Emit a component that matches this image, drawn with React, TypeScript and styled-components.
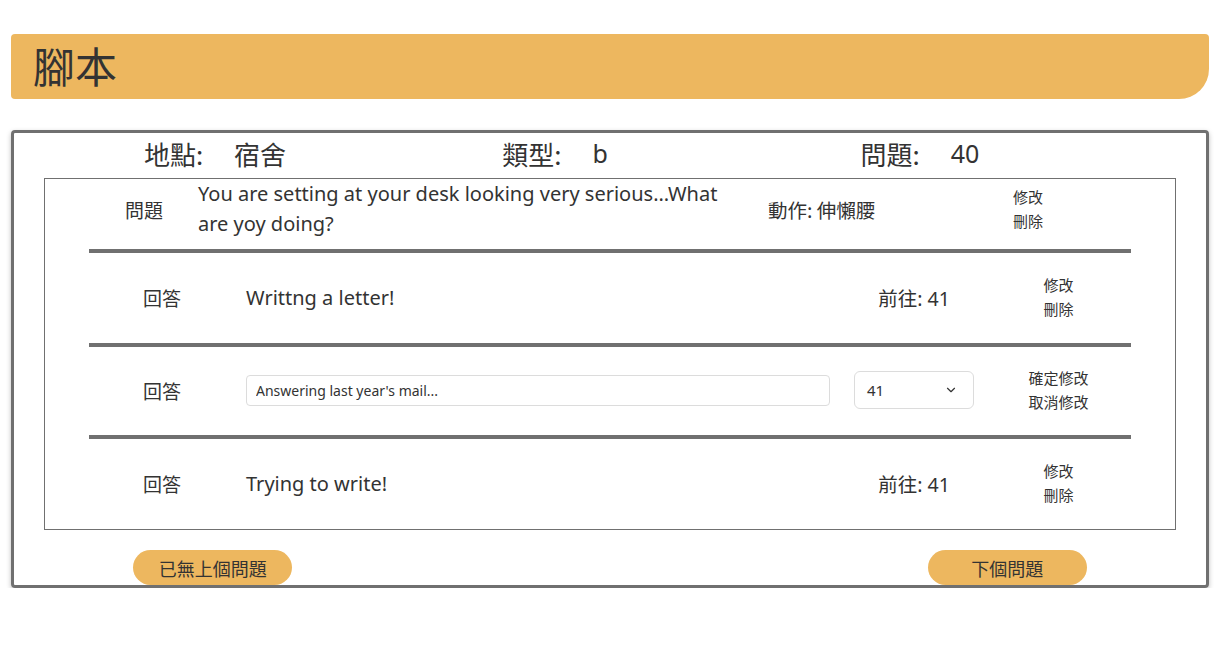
import React from "react";
import styled, { createGlobalStyle } from "styled-components";
import { ChevronDown } from "lucide-react";

const Global = createGlobalStyle`
  html, body { margin: 0; padding: 0; background: #fff; }
  body {
    font-family: "Noto Sans", "Noto Sans CJK TC", sans-serif;
    color: #333;
  }
  * { box-sizing: border-box; }
`;

const Page = styled.div`
  padding: 34px 14px 0 11px;
  display: flex;
  flex-direction: column;
  gap: 31px;
`;

const TitleBar = styled.div`
  height: 65px;
  background: #edb75f;
  border-radius: 4px 4px 30px 4px;
  display: flex;
  align-items: center;
  padding: 0 0 4px 22px;
`;

const Title = styled.h1`
  margin: 0;
  font-size: 42px;
  font-weight: 400;
  color: #333;
  font-family: "Noto Sans CJK TC", sans-serif;
`;

const Panel = styled.div`
  border: 3px solid #707070;
  border-radius: 4px;
  box-shadow: 0 2px 5px rgba(0, 0, 0, 0.25);
  display: flex;
  flex-direction: column;
`;

const InfoRow = styled.div`
  height: 45px;
  padding-bottom: 3px;
  display: grid;
  grid-template-columns: 402px 278px 452px;
  align-items: center;
`;

const InfoItem = styled.div`
  display: flex;
  justify-content: center;
  gap: 31px;
  font-size: 26px;
  line-height: 1;
  font-family: "Noto Sans CJK TC", sans-serif;
`;

const InfoValue = styled.span`
  font-family: "Noto Sans", "Noto Sans CJK TC", sans-serif;
  font-size: 25px;
`;

const InnerBox = styled.div`
  margin: 0 30px;
  border: 1px solid #707070;
  padding: 0 44px;
  display: flex;
  flex-direction: column;
`;

const QuestionRow = styled.div`
  margin: 0 -44px;
  height: 70px;
  padding: 0 0 10px 64px;
  display: grid;
  grid-template-columns: 70px 560px 274px 1fr;
  align-items: center;
`;

const Label = styled.div`
  text-align: center;
  font-size: 19px;
  font-family: "Noto Sans CJK TC", sans-serif;
`;

const QuestionText = styled.div`
  padding-left: 19px;
  font-size: 20px;
  line-height: 30px;
`;

const Action = styled.div`
  padding-left: 29px;
  font-size: 19.5px;
  font-family: "Noto Sans CJK TC", sans-serif;
`;

const LinkStack = styled.div<{ $center?: boolean }>`
  display: flex;
  flex-direction: column;
  align-items: ${(p) => (p.$center ? "center" : "flex-start")};
  font-size: 15px;
  line-height: 24px;
  font-family: "Noto Sans CJK TC", sans-serif;
  cursor: pointer;
`;

const Separator = styled.div`
  height: 4px;
  background: #707070;
`;

const AnswerRow = styled.div<{ $h: number }>`
  height: ${(p) => p.$h}px;
  padding-bottom: 2px;
  display: grid;
  grid-template-columns: 146px 607px 144px 1fr;
  align-items: center;
`;

const AnswerText = styled.div`
  padding-left: 11px;
  font-size: 20px;
`;

const Goto = styled.div`
  text-align: center;
  font-size: 19.5px;
`;

const InputWrap = styled.div`
  padding-left: 11px;
`;

const TextInput = styled.input`
  width: 584px;
  height: 31px;
  border: 1px solid #dcdcdc;
  border-radius: 4px;
  padding: 0 9px;
  font-size: 14px;
  font-family: "Noto Sans", sans-serif;
  color: #333;
  outline: none;
`;

const SelectWrap = styled.div`
  display: flex;
  justify-content: center;
`;

const SelectBox = styled.div`
  width: 120px;
  height: 38px;
  border: 1px solid #dcdcdc;
  border-radius: 6px;
  display: flex;
  align-items: center;
  justify-content: space-between;
  padding: 0 15px 0 12px;
  font-size: 15px;
`;

const ButtonRow = styled.div`
  margin-top: 20px;
  display: grid;
  grid-template-columns: 1fr 1fr 1fr;
`;

const NavButton = styled.button<{ $col: number }>`
  grid-column: ${(p) => p.$col};
  justify-self: center;
  width: 159px;
  height: 35px;
  border: none;
  border-radius: 18px;
  background: #edb75f;
  color: #333;
  font-size: 18px;
  font-family: "Noto Sans CJK TC", sans-serif;
  cursor: pointer;
`;

const answers = [
  { text: "Writtng a letter!", goto: 41 },
  { text: "Answering last year's mail...", goto: 41, editing: true },
  { text: "Trying to write!", goto: 41 },
];

export default function App() {
  return (
    <>
      <Global />
      <Page>
        <TitleBar>
          <Title>腳本</Title>
        </TitleBar>
        <Panel>
          <InfoRow>
            <InfoItem>
              <span>地點:</span>
              <span>宿舍</span>
            </InfoItem>
            <InfoItem>
              <span>類型:</span>
              <InfoValue>b</InfoValue>
            </InfoItem>
            <InfoItem>
              <span>問題:</span>
              <InfoValue>40</InfoValue>
            </InfoItem>
          </InfoRow>
          <InnerBox>
            <QuestionRow>
              <Label>問題</Label>
              <QuestionText>
                You are setting at your desk looking very serious...What are yoy doing?
              </QuestionText>
              <Action>動作: 伸懶腰</Action>
              <LinkStack>
                <span>修改</span>
                <span>刪除</span>
              </LinkStack>
            </QuestionRow>
            {answers.map((a, i) => (
              <React.Fragment key={i}>
                <Separator />
                <AnswerRow $h={a.editing ? 88 : 90}>
                  <Label>回答</Label>
                  {a.editing ? (
                    <InputWrap>
                      <TextInput defaultValue={a.text} />
                    </InputWrap>
                  ) : (
                    <AnswerText>{a.text}</AnswerText>
                  )}
                  {a.editing ? (
                    <SelectWrap>
                      <SelectBox>
                        <span>{a.goto}</span>
                        <ChevronDown size={14} strokeWidth={2} />
                      </SelectBox>
                    </SelectWrap>
                  ) : (
                    <Goto>前往: {a.goto}</Goto>
                  )}
                  <LinkStack $center>
                    {a.editing ? (
                      <>
                        <span>確定修改</span>
                        <span>取消修改</span>
                      </>
                    ) : (
                      <>
                        <span>修改</span>
                        <span>刪除</span>
                      </>
                    )}
                  </LinkStack>
                </AnswerRow>
              </React.Fragment>
            ))}
          </InnerBox>
          <ButtonRow>
            <NavButton $col={1}>已無上個問題</NavButton>
            <NavButton $col={3}>下個問題</NavButton>
          </ButtonRow>
        </Panel>
      </Page>
    </>
  );
}
